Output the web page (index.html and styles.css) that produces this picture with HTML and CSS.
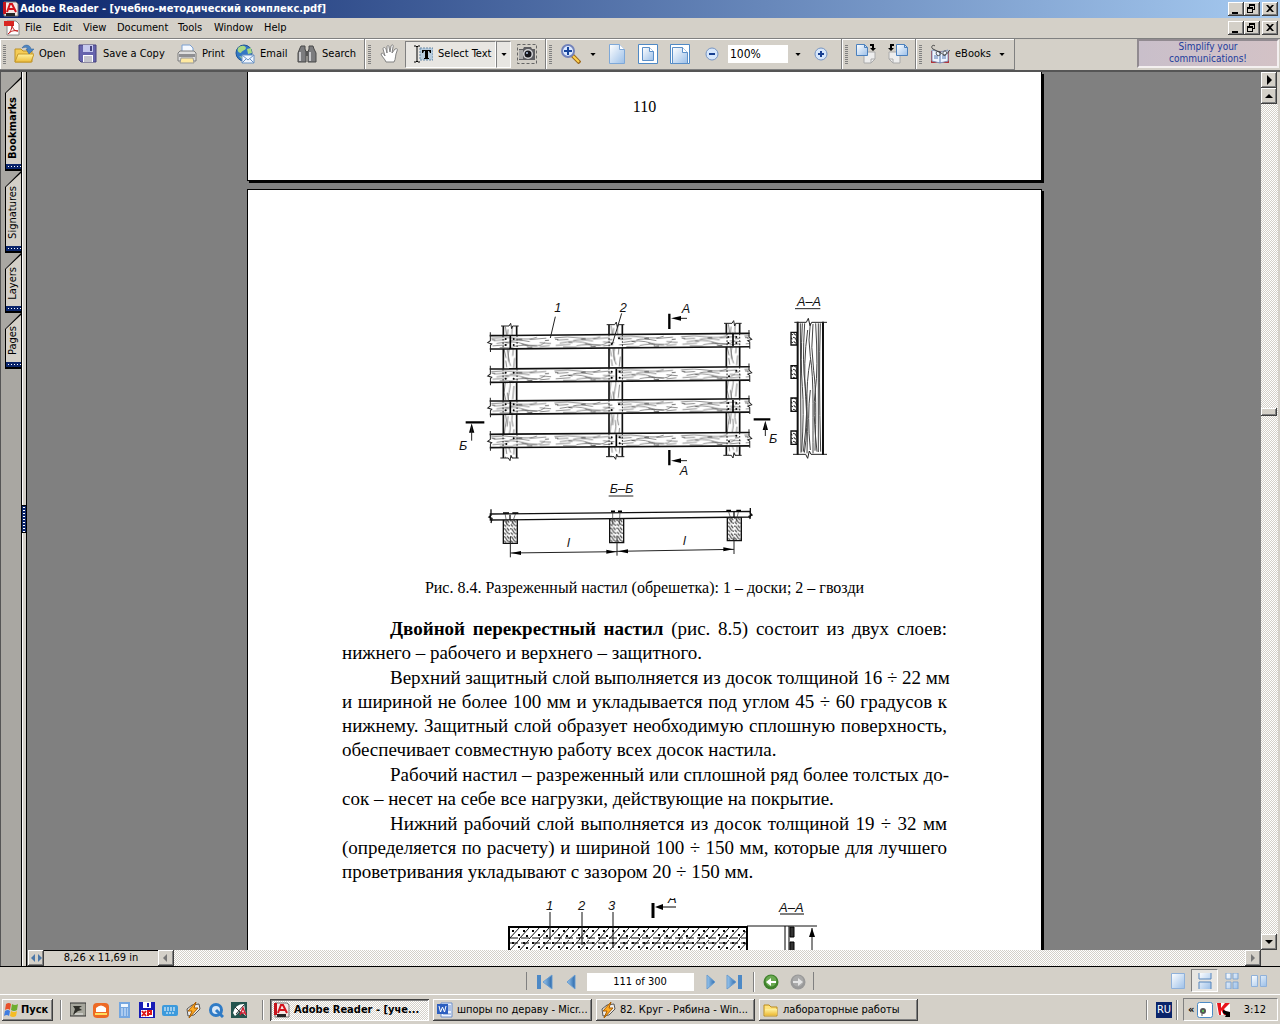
FILE: index.html
```html
<!DOCTYPE html>
<html lang="ru">
<head>
  <meta charset="utf-8">
  <title>Adobe Reader - [учебно-методический комплекс.pdf]</title>
  <link rel="stylesheet" href="styles.css">
</head>
<body>
  <!-- shared gradients -->
  <svg class="defs" width="0" height="0">
    <defs>
      <linearGradient id="blue" x1="0" y1="0" x2="1" y2="1"><stop offset="0" stop-color="#fff"/><stop offset="1" stop-color="#9bbfe8"/></linearGradient>
      <linearGradient id="nav" x1="0" y1="0" x2="1" y2="0"><stop offset="0" stop-color="#9cc8ee"/><stop offset="1" stop-color="#2a69ac"/></linearGradient>
      <linearGradient id="gold" x1="0" y1="0" x2="0" y2="1"><stop offset="0" stop-color="#fff3a0"/><stop offset="1" stop-color="#eebd3c"/></linearGradient>
      <symbol id="i-min" viewBox="0 0 16 14"><path d="M4 10h6v2H4z"/></symbol>
      <symbol id="i-restore" viewBox="0 0 16 14"><path d="M5 2h6v6H9V7h1V4H6v1H5zM3 5h6v6H3zm1 2v3h4V7z" fill-rule="evenodd"/></symbol>
      <symbol id="i-close" viewBox="0 0 16 14"><path d="M4 3h2l2 2 2-2h2L9 6.500l3 3.500h-2L8 8l-2 2H4l3-3.500z"/></symbol>
      <symbol id="i-adobe" viewBox="0 0 16 16"><path d="M1 1h12l2 2v12H1z" fill="#f4e6e4" stroke="#777"/><path d="M0 1h3v12H0z" fill="#c4141c"/><path d="M4 11L7 3h2l4 8M6 8h5" fill="none" stroke="#d3121b" stroke-width="2"/><path d="M3 12h9v3H3z" fill="#252525"/></symbol>
      <symbol id="i-down" viewBox="0 0 7 4"><path d="M0 0h7L3.500 4z"/></symbol>
      <symbol id="i-word" viewBox="0 0 16 16"><path d="M4 1h11v14H4z" fill="#eef4ff" stroke="#6d8fcb"/><path d="M11 4h3M11 6h3M11 8h3M6 12h8" stroke="#6d8fcb"/><path d="M0 2h11v10H0z" fill="#2c5fc0"/><path d="M2 4l1.500 6 2-5 2 5L9 4" fill="none" stroke="#fff"/></symbol>
      <symbol id="i-winamp" viewBox="0 0 16 16"><path d="M2 7l5-4 7-1 1 5-6 6-6 1z" fill="#eee" stroke="#555"/><path d="M11 0L3 9h4l-3 7 9-10H9z" fill="#ffab22" stroke="#a85c00"/></symbol>
      <symbol id="i-folder" viewBox="0 0 16 16"><path d="M1 3h5l2 2h6v9H1z" fill="#ffe27a" stroke="#bb8c1c"/><path d="M2 7h12v6H2z" fill="url(#gold)"/></symbol>
    </defs>
  </svg>

  <header class="titlebar">
    <svg class="ic16"><use href="#i-adobe"/></svg>
    <h1>Adobe Reader - [учебно-методический комплекс.pdf]</h1>
    <div class="winbtns">
      <button aria-label="Minimize"><svg><use href="#i-min"/></svg></button>
      <button aria-label="Restore"><svg><use href="#i-restore"/></svg></button>
      <button class="close" aria-label="Close"><svg><use href="#i-close"/></svg></button>
    </div>
  </header>

  <nav class="menubar">
    <svg class="ic16" viewBox="0 0 16 16"><path d="M3 1h9l3 3v11H3z" fill="#fff" stroke="#888"/><path d="M0 1h10v5H0z" fill="#d92622"/><path d="M4 14c2-1 4-5 4-9 1 5 3 6 6 6-4-1-7 0-10 3z" fill="none" stroke="#c11919"/></svg>
    <a href="#">File</a><a href="#">Edit</a><a href="#">View</a><a href="#">Document</a><a href="#">Tools</a><a href="#">Window</a><a href="#">Help</a>
    <div class="winbtns">
      <button aria-label="Minimize document"><svg><use href="#i-min"/></svg></button>
      <button aria-label="Restore document"><svg><use href="#i-restore"/></svg></button>
      <button class="close" aria-label="Close document"><svg><use href="#i-close"/></svg></button>
    </div>
  </nav>

  <div class="toolbar">
    <div class="group g-file">
      <i class="grip"></i>
      <button><svg class="ic20" viewBox="0 0 20 20"><path d="M1 5h6l2 2h9v11H1z" fill="#f5cc55" stroke="#bd9127"/><path d="M1 18l3-8h16l-3 8z" fill="url(#gold)" stroke="#c79a2b"/><path d="M8 4c2-4 8-4 9 1h3l-5 5-3-5h2c-1-2-3-2-6-1z" fill="#4d86c4" stroke="#2f5d94" stroke-width=".5"/></svg>Open</button>
      <button><svg class="ic20" viewBox="0 0 20 20"><path d="M1 1h17v17H3l-2-2z" fill="#6664ad" stroke="#44417f"/><path d="M5 1h10v7H5z" fill="#c6c9ee"/><path d="M5 11h10v7H5z" fill="#fff"/><path d="M6 13h8M6 15h8M6 17h8" stroke="#8a8a9c"/><path d="M12 2h2v5h-2z" fill="#44417f"/></svg>Save a Copy</button>
      <button><svg class="ic20" viewBox="0 0 20 20"><path d="M5 9V1h8l3 3v5z" fill="#f5f9ff" stroke="#7ba0d2"/><path d="M1 9l2-2h14l2 2v8H1z" fill="#dedede" stroke="#7d7d7d"/><path d="M2 10h16v3H2z" fill="#8f8f92"/><path d="M4 14h12l1 5H3z" fill="#ffe9a0" stroke="#999"/></svg>Print</button>
      <button><svg class="ic20" viewBox="0 0 20 20"><circle cx="9" cy="9" r="8" fill="#3277c5" stroke="#1f5694"/><path d="M3 4c3-3 7-3 8 0-1 3-4 2-5 5-3 0-4-3-3-5zM12 5l4-1 1 5-4 1zM4 12l4 1v3z" fill="#a9d983"/><path d="M7 11h12v8H7z" fill="#f0f6ff" stroke="#6b93c4"/><path d="M7 11l6 5 6-5M7 19l4-4M19 19l-4-4" fill="none" stroke="#6b93c4"/></svg>Email</button>
      <button><svg class="ic20" viewBox="0 0 20 20"><path d="M4 2h4v3l1 3v10H1V9l2-5zM12 2h4l1 3 2 4v9h-8V8l1-3z" fill="#7c7c7e" stroke="#484848"/><path d="M9 7h2v5H9z" fill="#555"/><path d="M3 8v9M13 8v9" stroke="#c9c9cc" stroke-width="2"/></svg>Search</button>
    </div>
    <div class="group g-select">
      <i class="grip"></i>
      <button aria-label="Hand"><svg class="ic20" viewBox="0 0 20 20"><path d="M6 18c-1-3-4-5-5-8 1-2 3 0 4 2L3 5c0-2 2-2 3 0l1 4V3c0-2 2-2 2 0l1 5 1-6c1-2 3-1 2 1l-1 6 3-4c2-1 3 0 2 2-2 4-1 8-3 11z" fill="#fff" stroke="#818181"/></svg></button>
      <button class="pressed"><svg class="ic20" viewBox="0 0 20 20"><path d="M1 2h2l1 1 1-1h2M4 3v14M1 18h2l1-1 1 1h2" fill="none" stroke="#000"/><path d="M7 4h13v12H7z" fill="#b6ccdf" stroke="#6b8aa8" stroke-dasharray="2 1"/><path d="M9 6h9v3h-1l-1-2h-1v7h1v1h-5v-1h1V7h-1l-1 2H9z"/></svg>Select Text</button>
      <button class="pressed arrow" aria-label="Select options"><svg><use href="#i-down"/></svg></button>
      <button class="snap" aria-label="Snapshot"><svg class="ic20" viewBox="0 0 20 20"><path d="M.5.500h19v19H.5z" fill="none" stroke="#666" stroke-dasharray="3 2"/><path d="M2 5h4l1-2h7l1 2h3v11H2z" fill="#5d5d61"/><path d="M2 6h4v9H2z" fill="#aaa"/><circle cx="11" cy="10" r="5" fill="#d5d5d8"/><circle cx="11" cy="10" r="3.500" fill="#15151b"/><circle cx="10" cy="9" r="1" fill="#b5c8e8"/></svg></button>
    </div>
    <div class="group g-zoom">
      <i class="grip"></i>
      <button aria-label="Zoom In tool"><svg class="ic20" viewBox="0 0 20 20"><path d="M11 11l8 8" stroke="#9c681b" stroke-width="4"/><path d="M12 12l6 6" stroke="#ffd34d" stroke-width="2"/><circle cx="7" cy="7" r="6" fill="#dbe8ff" stroke="#7282ba" stroke-width="2"/><path d="M3 6h3V3h2v3h3v2H8v3H6V8H3z" fill="#17459c"/></svg></button>
      <button class="arrow" aria-label="Zoom tools"><svg><use href="#i-down"/></svg></button>
      <button aria-label="Actual Size"><svg class="ic20" viewBox="0 0 20 20"><path d="M2.500.500h10l5 5v14h-15z" fill="url(#blue)" stroke="#7ea8d8"/><path d="M12.500.500v5h5" fill="#fff" stroke="#7ea8d8"/></svg></button>
      <button aria-label="Fit Page"><svg class="ic20" viewBox="0 0 20 20"><path d="M.5.500h19v19H.5z" fill="#fff" stroke="#4f89c5"/><path d="M4.500 3.500h7l4 4v9h-11z" fill="url(#blue)" stroke="#5b8fc8"/><path d="M11.500 3.500v4h4" fill="#fff" stroke="#5b8fc8"/></svg></button>
      <button aria-label="Fit Width"><svg class="ic20" viewBox="0 0 20 20"><path d="M.5.500h19v19H.5z" fill="#fff" stroke="#4f89c5"/><path d="M2.500 3.500h10l5 5v11h-15z" fill="url(#blue)" stroke="#5b8fc8"/><path d="M12.500 3.500v5h5" fill="#fff" stroke="#5b8fc8"/></svg></button>
      <button aria-label="Zoom Out"><svg class="ic14" viewBox="0 0 14 14"><circle cx="7" cy="7" r="6" fill="#d7e7fb" stroke="#7795c3"/><path d="M4 6h6v2H4z" fill="#173f91"/></svg></button>
      <input type="text" value="100%" aria-label="Zoom">
      <button class="arrow" aria-label="Zoom levels"><svg><use href="#i-down"/></svg></button>
      <button aria-label="Zoom In"><svg class="ic14" viewBox="0 0 14 14"><circle cx="7" cy="7" r="6" fill="#d7e7fb" stroke="#7795c3"/><path d="M4 6h2V4h2v2h2v2H8v2H6V8H4z" fill="#173f91"/></svg></button>
    </div>
    <div class="group g-rotate">
      <i class="grip"></i>
      <button aria-label="Rotate clockwise"><svg class="ic20" viewBox="0 0 20 20"><path d="M8 8h11v7l-4 4H8z" fill="#eee" stroke="#aaa"/><path d="M19 15h-4v4" fill="none" stroke="#aaa"/><path d="M.5.500h8l3 3v8H.5z" fill="url(#blue)" stroke="#4b80bd"/><path d="M8.500.500v3h3" fill="none" stroke="#4b80bd"/><path d="M14 0h4v4h2l-3 3-3-3h2V2h-2z"/></svg></button>
      <button aria-label="Rotate counterclockwise"><svg class="ic20" viewBox="0 0 20 20"><path d="M1 8h11v11H5l-4-4z" fill="#eee" stroke="#aaa"/><path d="M1 15h4v4" fill="none" stroke="#aaa"/><path d="M8.500.500h8l3 3v8h-11z" fill="url(#blue)" stroke="#4b80bd"/><path d="M16.500.500v3h3" fill="none" stroke="#4b80bd"/><path d="M6 0H2v4H0l3 3 3-3H4V2h2z"/></svg></button>
    </div>
    <div class="group g-ebooks">
      <i class="grip"></i>
      <button><svg class="ic20" viewBox="0 0 20 20"><path d="M1 7h18v12H1z" fill="#b2343a"/><path d="M2 6l8 2 8-2v11l-8 2-8-2z" fill="#eef4ff" stroke="#8395b8"/><path d="M10 8v11M4 12h4M4 14h4M12 12h4M12 14h4" stroke="#5679b1"/><path d="M5 2C3 0 0 3 3 5l6 3c3 2 0 5-2 3s0-5 3-3 3 4 5 3 2-4 0-4-3 3-1 4 4-3 6-5" fill="none" stroke="#444"/></svg>eBooks</button>
      <button class="arrow" aria-label="eBooks options"><svg><use href="#i-down"/></svg></button>
    </div>
    <a class="promo" href="#">Simplify your<br>communications!</a>
  </div>

  <main>
    <aside class="tabs">
      <button class="tab active"><span>Bookmarks</span></button>
      <button class="tab signatures"><span>Signatures</span></button>
      <button class="tab layers"><span>Layers</span></button>
      <button class="tab pages"><span>Pages</span></button>
    </aside>
    <div class="splitter"><i></i></div>

    <div class="viewer">
      <div class="canvas">
        <article class="page page-prev"><p class="pageno">110</p></article>
        <article class="page">
          <svg class="figure" viewBox="16 0 1200 900">
            <defs>
              <pattern id="grain" width="190" height="40" patternUnits="userSpaceOnUse">
                <path d="M4 8q40-5 78 1t60-3M12 15l34-2M60 17q20-6 60 2M20 24q50-10 86 3t60-5M8 31l44-3M70 33q30-6 72-2M120 13l50-4M150 22l34 3M30 36l40 1M150 34l30-3M96 26l20 6" fill="none" stroke="#555" stroke-width="2"/>
                <path d="M6 12l10 1M84 13l14-1M46 21l12 2M112 35l16 1M166 16l12-1" stroke="#222" stroke-width="2"/>
              </pattern>
              <pattern id="grainV" width="40" height="130" patternUnits="userSpaceOnUse">
                <path d="M7 2q6 20-1 44t3 50M15 10l-3 32M20 26q5 20-2 44t5 50M28 2q-4 20 2 40M33 50l-4 40M13 70l5 38M35 96l-3 30M8 104l3 20" fill="none" stroke="#444" stroke-width="2"/>
              </pattern>
              <pattern id="hatch" width="20" height="24" patternUnits="userSpaceOnUse">
                <path d="M0 4q7 0 9 7t11 9M2 16l7 6M11 2l7 8" fill="none" stroke="#222" stroke-width="3"/>
              </pattern>
              <g id="plank">
                <path d="M0 0h780v40H0z" fill="#fff"/>
                <path d="M0 0h780v40H0z" fill="url(#grain)"/>
                <path d="M0 0h780M0 40h780" stroke="#111" stroke-width="5"/>
                <path d="M2-10v25l-8 6 12 4-4 4v20M778-10v20l8 8-12 4 6 4v20" fill="none" stroke="#222" stroke-width="3"/>
                <path d="M40 0v40M82 0v40M358 0v40M398 0v40M712 0v40M750 0v40" stroke="#222" stroke-width="3" stroke-dasharray="5 5"/>
              </g>
              <g id="post">
                <path d="M0 0h42v396H0z" fill="#fff"/>
                <path d="M0 0h42v396H0z" fill="url(#grainV)"/>
                <path d="M1 0v396M41 0v396" stroke="#111" stroke-width="5"/>
                <path d="M-6 0h24l5-8 3 16 3-8h18M-8 396h24l5 8 3-16 3 8h20" fill="none" stroke="#222" stroke-width="3"/>
              </g>
              <g id="nails"><circle cx="-14" cy="-9" r="3"/><circle cx="10" cy="-9" r="3"/><circle cx="-14" cy="9" r="3"/><circle cx="10" cy="9" r="3"/></g>
              <g id="joint"><path d="M0-18v36" stroke="#000" stroke-width="5"/><use href="#nails"/></g>
              <g id="pair"><circle cx="-12" cy="9" r="3"/><circle cx="10" cy="-8" r="3"/></g>
              <g id="foot"><path d="M0 0h42v72H0z" fill="#fff"/><path d="M0 0h42v72H0z" fill="url(#hatch)" stroke="#111" stroke-width="4"/></g>
            </defs>
            <use href="#post" x="190" y="138"/>
            <use href="#post" x="507" y="134"/>
            <use href="#post" x="859" y="130"/>
            <use href="#plank" transform="translate(150 167) rotate(-.5)"/>
            <use href="#plank" transform="translate(150 267) rotate(-.5)"/>
            <use href="#plank" transform="translate(150 363) rotate(-.5)"/>
            <use href="#plank" transform="translate(150 463) rotate(-.4)"/>
            <use href="#joint" x="212" y="186"/><use href="#pair" x="528" y="183"/><use href="#joint" x="880" y="180"/>
            <use href="#nails" x="212" y="287"/><use href="#joint" x="530" y="284"/><use href="#pair" x="880" y="280"/>
            <use href="#joint" x="212" y="382"/><use href="#pair" x="528" y="381"/><use href="#joint" x="880" y="378"/>
            <use href="#pair" x="212" y="483"/><use href="#joint" x="530" y="481"/><use href="#pair" x="880" y="475"/>
            <path d="M347 110l-15 64M546 100l-28 92" stroke="#222" stroke-width="3"/>
            <g class="sketch">
              <text x="344" y="96">1</text>
              <text x="540" y="96">2</text>
              <text x="726" y="100">А</text>
              <text x="720" y="586">А</text>
              <text x="58" y="510">Б</text>
              <text x="988" y="490">Б</text>
              <text x="1072" y="77">А–А</text>
              <text x="510" y="638">Б–Б</text>
              <text x="382" y="800">l</text>
              <text x="730" y="794">l</text>
            </g>
            <path d="M689 101v46M689 510v46" stroke="#000" stroke-width="7"/>
            <path d="M742 115h-36M742 542h-36" stroke="#222" stroke-width="3"/>
            <path d="M694 115l30-7v14zM694 542l30-7v14zM96 430l-8 28h16zM977 422l-8 28h16z"/>
            <path d="M78 427h56M942 418h50" stroke="#000" stroke-width="7"/>
            <path d="M96 440v42M977 430v38M1066 86h76M507 648h74" stroke="#222" stroke-width="3"/>
            <!-- section A-A -->
            <path d="M1054 157h18v38h-18zM1054 257h18v38h-18zM1054 354h18v40h-18zM1054 453h18v40h-18z" fill="url(#hatch)" stroke="#111" stroke-width="4"/>
            <path d="M1074 127h74v396h-74z" fill="#fff"/>
            <path d="M1082 130l2 388M1088 130q-6 120 0 190t-2 195M1095 130q-8 120 2 190t-6 195M1104 150q-14 100-6 200t-4 168M1112 240q-12 60-10 140t0 140M1112 330q-10 80 0 180M1112 130q-8 50 0 100t8 140 0 150M1120 132q-8 70 2 140t4 240M1128 130q8 140-1 200t5 185M1136 130v386M1142 130q-5 160 1 385" fill="none" stroke="#444" stroke-width="3"/>
            <path d="M1074 125v400M1150 125v400" stroke="#111" stroke-width="6"/>
            <path d="M1064 127h36l6-12 5 22 5-10h46M1060 523h38l6 12 5-22 5 10h48" fill="none" stroke="#222" stroke-width="3"/>
            <!-- section B-B -->
            <use href="#foot" x="191" y="718"/><use href="#foot" x="510" y="716"/><use href="#foot" x="863" y="710"/>
            <path d="M152 702l780-8v17l-780 9z" fill="#fff" stroke="#111" stroke-width="4"/>
            <path d="M154 688v18l-6 5 9 4-3 14M932 684v16l5 5-9 4 4 8M211 704v16M883 696v16" fill="none" stroke="#111" stroke-width="4"/>
            <path d="M196 700l6 34M228 700l-12 34M519 694v40M541 694l-2 40M866 692l10 34M897 692l-8 34" stroke="#333" stroke-width="2"/>
            <path d="M190 699h18M218 699h18M514 694h12M535 694h12M860 692h14M890 692h14" stroke="#000" stroke-width="5"/>
            <path d="M212 770v62M532 770v57M883 770v52M212 819l320-4M532 814l351-6" stroke="#222" stroke-width="3"/>
            <path d="M214 819l30-6v12zM530 815l-30-6v12zM535 814l30-6v12zM881 808l-30-6v12z"/>
          </svg>
          <p class="caption">Рис. 8.4. Разреженный настил (обрешетка): 1 – доски; 2 – гвозди</p>
          <div class="text">
            <p><b>Двойной перекрестный настил</b> (рис. 8.5) состоит из двух слоев:<br><span>нижнего – рабочего и верхнего – защитного.</span></p>
            <p>Верхний защитный слой выполняется из досок толщиной 16 ÷ 22 мм<br>и шириной не более 100 мм и укладывается под углом 45 ÷ 60 градусов к<br>нижнему. Защитный слой образует необходимую сплошную поверхность,<br><span>обеспечивает совместную работу всех досок настила.</span></p>
            <p>Рабочий настил – разреженный или сплошной ряд более толстых до-<br><span>сок – несет на себе все нагрузки, действующие на покрытие.</span></p>
            <p>Нижний рабочий слой выполняется из досок толщиной 19 ÷ 32 мм<br>(определяется по расчету) и шириной 100 ÷ 150 мм, которые для лучшего<br><span>проветривания укладывают с зазором 20 ÷ 150 мм.</span></p>
          </div>
          <svg class="figure2" viewBox="445 898 400 90">
            <defs>
              <pattern id="boards" x="509" y="927" width="20" height="12" patternUnits="userSpaceOnUse">
                <path d="M0 12L11 0M10 12L20 1" stroke="#111"/>
                <path d="M3 3h2v2H3zM9 7h2v2H9zM14 3h2v2h-2zM17 8h2v2h-2z"/>
              </pattern>
            </defs>
            <path d="M509 927h238v70H509z" fill="url(#boards)" stroke="#000" stroke-width="2"/>
            <path d="M510 938h236M510 943h236" stroke="#111" stroke-dasharray="8 3"/>
            <path d="M550 912v28M582 912v33M613 912v36M747 926h70M812 928v60" stroke="#111"/>
            <path d="M653 903v15" stroke="#000" stroke-width="3"/>
            <path d="M676 907h-16M780 914h24" stroke="#000"/>
            <path d="M655 907l8-3v6zM812 928l-3 9h6z"/>
            <path d="M785 926v70M789 926v70" stroke="#000"/>
            <path d="M790 927h4v10h-4zM790 942h4v12h-4z" fill="#333" stroke="#000"/>
            <g class="sketch small">
              <text x="546" y="910">1</text><text x="578" y="910">2</text><text x="608" y="910">3</text>
              <text x="668" y="903">А</text><text x="779" y="912">А–А</text>
            </g>
          </svg>
        </article>
      </div>
      <div class="vscroll">
        <button aria-label="Panel menu"><svg viewBox="0 0 16 16"><path d="M6 3l5 5-5 5z"/></svg></button>
        <button aria-label="Scroll up"><svg viewBox="0 0 16 16"><path d="M8 6l4 4H4z"/></svg></button>
        <div class="track"><i class="before"></i><i class="thumb"></i><i class="after"></i></div>
        <button aria-label="Scroll down"><svg viewBox="0 0 16 16"><path d="M4 6h8l-4 4z"/></svg></button>
      </div>
      <div class="hscroll">
        <button aria-label="Resize"><svg viewBox="0 0 16 16"><path d="M7 4v8L3 8zM10 4v8l4-4z" fill="#4c78a8"/></svg></button>
        <span class="size">8,26 x 11,69 in</span>
        <button aria-label="Scroll left"><svg viewBox="0 0 16 16"><path d="M9 4v8L5 8z" fill="#777"/></svg></button>
        <div class="track"></div>
        <button aria-label="Scroll right"><svg viewBox="0 0 16 16"><path d="M6 4v8l4-4z" fill="#777"/></svg></button>
      </div>
    </div>
  </main>

  <footer class="statusbar">
    <div class="pager">
      <button aria-label="First Page"><svg class="ic16" viewBox="0 0 16 16"><path d="M0 1h4v14H0z" fill="#4d89c6"/><path d="M15 1v14L6 8z" fill="url(#nav)" stroke="#6a9dd0"/></svg></button>
      <button aria-label="Previous Page"><svg class="ic16" viewBox="0 0 16 16"><path d="M12 1v14L4 8z" fill="url(#nav)" stroke="#6a9dd0"/></svg></button>
      <input type="text" value="111 of 300" aria-label="Page">
      <button aria-label="Next Page"><svg class="ic16" viewBox="0 0 16 16"><path d="M4 1v14l8-7z" fill="url(#nav)" stroke="#6a9dd0"/></svg></button>
      <button aria-label="Last Page"><svg class="ic16" viewBox="0 0 16 16"><path d="M12 1h4v14h-4z" fill="#4d89c6"/><path d="M1 1v14l9-7z" fill="url(#nav)" stroke="#6a9dd0"/></svg></button>
      <i class="sep"></i>
      <button aria-label="Previous View"><svg class="ic16" viewBox="0 0 16 16"><circle cx="8" cy="8" r="7.500" fill="#3f812c"/><circle cx="8" cy="7" r="5.500" fill="#6aa951"/><path d="M3 8l5-4v3h5v2H8v3z" fill="#fff"/></svg></button>
      <button aria-label="Next View"><svg class="ic16" viewBox="0 0 16 16"><circle cx="8" cy="8" r="7.500" fill="#999"/><circle cx="8" cy="7" r="5.500" fill="#aaa"/><path d="M13 8L8 4v3H3v2h5v3z" fill="#e4e4e4"/></svg></button>
    </div>
    <div class="layouts">
      <button aria-label="Single Page"><svg class="ic16" viewBox="0 0 16 16"><path d="M1.500.500h13v15h-13z" fill="url(#blue)" stroke="#8fb1da"/></svg></button>
      <button class="pressed" aria-label="Continuous"><svg class="ic16" viewBox="0 0 16 16"><path d="M2 0h12v6H2zM2 9h12v7H2z" fill="url(#blue)"/><path d="M2 0v6h12V0M2 16V9h12v7" fill="none" stroke="#5785bb"/></svg></button>
      <button aria-label="Continuous - Facing"><svg class="ic16" viewBox="0 0 16 16"><path d="M2 0h5v6H2zM9 0h5v6H9zM2 9h5v7H2zM9 9h5v7H9z" fill="url(#blue)" stroke="#7fa5d2"/></svg></button>
      <button aria-label="Facing"><svg class="ic16" viewBox="0 0 16 16"><path d="M.5 2.500h6v11h-6zM9.500 2.500h6v11h-6z" fill="url(#blue)" stroke="#8fb1da"/></svg></button>
    </div>
  </footer>

  <div class="taskbar">
    <button class="start"><svg class="ic16" viewBox="0 0 16 16"><path d="M2 2q3-2 5 0L6 8Q4 6 1 8z" fill="#e8502a"/><path d="M8 2q3 2 6 0l-1 6q-3 2-6 0z" fill="#6dad2e"/><path d="M1 9q3-2 5 0l-1 5q-2-2-5 0z" fill="#3f7de0"/><path d="M7 9q3 2 6 0l-1 5q-3 2-6 0z" fill="#f4bc25"/></svg>Пуск</button>
    <i class="sep"></i>
    <div class="quick">
      <a href="#" aria-label="Desktop"><svg class="ic16" viewBox="0 0 16 16"><path d="M0 1h16v13H0z" fill="#a6a69c" stroke="#333"/><path d="M3 4h9l-3 2 3 2-4 1-5 4 2-6z" fill="#2e2e28"/><path d="M5 12h8" stroke="#eee"/></svg></a>
      <a href="#" aria-label="Mail"><svg class="ic16" viewBox="0 0 16 16"><rect y="1" width="16" height="15" rx="4" fill="#ed6a25"/><path d="M3 10V6q5-5 10 0v4z" fill="#fff"/><path d="M2 11h12v2H2z" fill="#ffde5c"/></svg></a>
      <a href="#" aria-label="Calculator"><svg class="ic16" viewBox="0 0 16 16"><path d="M3 0h11v16H3z" fill="#76a7e0"/><path d="M5 2h7v3H5z" fill="#f0f8ff"/><path d="M5 7h7M5 9h7M5 11h7M5 13h7" stroke="#e3efff" stroke-dasharray="2 1"/></svg></a>
      <a href="#" aria-label="Total Commander"><svg class="ic16" viewBox="0 0 16 16"><path d="M0 0h16v16H0z" fill="#171bb6"/><path d="M4 0h8v6H4z" fill="#fff"/><path d="M8 1h2v4H8z" fill="#171bb6"/><path d="M2 8h12v7H2z" fill="#fff"/><path d="M3 9l4 5M7 9l-4 5M9 14V9h3v3H9" fill="none" stroke="#e01717" stroke-width="2"/></svg></a>
      <a href="#" aria-label="Keyboard"><svg class="ic16" viewBox="0 0 16 16"><rect y="3" width="16" height="11" rx="2" fill="#3c9adc"/><path d="M2 6h12M2 8h12M4 11h8" stroke="#fff" stroke-dasharray="2 1"/></svg></a>
      <a href="#" aria-label="Winamp"><svg class="ic16"><use href="#i-winamp"/></svg></a>
      <a href="#" aria-label="QuickTime"><svg class="ic16" viewBox="0 0 16 16"><circle cx="8" cy="8" r="5.500" fill="#d9e7f6" stroke="#2f7bc6" stroke-width="3"/><path d="M8 8l7 7" stroke="#2f7bc6" stroke-width="3"/></svg></a>
      <a href="#" aria-label="AutoCAD"><svg class="ic16" viewBox="0 0 16 16"><path d="M0 0h16v16H0z" fill="#24544e"/><path d="M2 11Q4 2 13 2l2 12-6-5-5 5z" fill="#fff"/><path d="M4 5l9 9M13 3l-8 9" stroke="#333"/><path d="M9 13l3-7 3 7M10 11h4" fill="none" stroke="#d12235" stroke-width="1.500"/></svg></a>
    </div>
    <i class="sep"></i>
    <div class="tasks">
      <button class="current"><svg class="ic16"><use href="#i-adobe"/></svg><span>Adobe Reader - [уче...</span></button>
      <button><svg class="ic16"><use href="#i-word"/></svg><span>шпоры по дераву - Micr...</span></button>
      <button><svg class="ic16"><use href="#i-winamp"/></svg><span>82. Круг - Рябина - Win...</span></button>
      <button><svg class="ic16"><use href="#i-folder"/></svg><span>лабораторные работы</span></button>
    </div>
    <i class="sep"></i>
    <button class="lang">RU</button>
    <i class="sep"></i>
    <div class="tray">
      <b>«</b>
      <svg class="ic16" viewBox="0 0 16 16"><rect x=".5" y=".5" width="15" height="15" rx="2" fill="#fff" stroke="#4b8ac5"/><circle cx="6" cy="9" r="3" fill="#555"/><circle cx="6" cy="9" r="1" fill="#5be04f"/><path d="M5 12v2" stroke="#555"/></svg>
      <svg class="ic16" viewBox="0 0 16 16"><path d="M0 1h14v12H2z" fill="#fff"/><path d="M1 1h4v5l4-5h5L8 7l4 6H8L5 8v5H3z" fill="#e8141b"/><path d="M7 8l3 1 4 1v5H9l1-2-3-2z"/></svg>
      <time>3:12</time>
    </div>
  </div>
</body>
</html>
```
FILE: styles.css
```css
* {
  box-sizing: border-box;
}
body {
  margin: 0;
  height: 100vh;
  display: flex;
  flex-direction: column;
  overflow: hidden;
  background: #d4d0c8;
  color: #000;
  font: 11px/14px "DejaVu Sans Condensed", Tahoma, sans-serif;
}
button, input {
  margin: 0;
  padding: 0;
  border: 0;
  border-radius: 0;
  background: none;
  color: inherit;
  font: inherit;
}
a {
  color: inherit;
  text-decoration: none;
}
svg {
  display: block;
  flex: none;
}
.defs {
  position: absolute;
}
.ic14 {
  width: 14px;
  height: 14px;
}
.ic16 {
  width: 16px;
  height: 16px;
}
.ic20 {
  width: 20px;
  height: 20px;
}

/* title and menu */
.titlebar {
  height: 18px;
  flex: none;
  display: flex;
  align-items: center;
  gap: 1px;
  padding: 0 2px 0 3px;
  background: linear-gradient(90deg, #0a246a, #a6caf0);
  color: #fff;
}
.titlebar h1 {
  margin: 0;
  flex: 1;
  font-size: 11px;
  line-height: 14px;
}
.winbtns {
  display: flex;
  margin-left: auto;
}
.winbtns button {
  width: 16px;
  height: 14px;
}
.winbtns svg {
  width: 16px;
  height: 14px;
}
.winbtns .close {
  margin-left: 2px;
}
.winbtns button, .vscroll button, .hscroll button, .thumb, .start, .tasks button {
  background: #d4d0c8;
  color: #000;
  box-shadow: inset -1px -1px #404040, inset 1px 1px #fff, inset -2px -2px #808080;
}
.menubar {
  height: 20px;
  flex: none;
  display: grid;
  grid-template-columns: 21px 28px 30px 34px 61px 36px 50px 40px 1fr;
  align-items: center;
  padding: 0 2px 0 4px;
}

/* toolbar */
.toolbar {
  height: 34px;
  flex: none;
  display: flex;
  border-top: 1px solid #808080;
  border-bottom: 2px solid #555;
}
.group {
  display: grid;
  align-items: center;
  padding-left: 3px;
  border-right: 1px solid #808080;
  border-bottom: 1px solid #808080;
  box-shadow: inset 1px 1px #fff;
}
.g-file {
  grid-template-columns: 11px 64px 99px 58px 62px 67px;
}
.g-select {
  grid-template-columns: 12px 25px 91px 15px 34px;
}
.g-zoom {
  grid-template-columns: 12px 24px 22px 31px 32px 35px 23px 62px 24px 27px;
}
.g-rotate {
  grid-template-columns: 11px 32px 27px;
}
.g-ebooks {
  grid-template-columns: 11px 64px 20px;
}
.grip {
  width: 3px;
  height: 19px;
  background: repeating-linear-gradient(#808080 0 1px, #d4d0c8 1px 2px);
}
.group button {
  display: flex;
  align-items: center;
  gap: 5px;
  white-space: nowrap;
}
.group .arrow {
  width: 15px;
  justify-content: center;
}
.arrow svg {
  width: 6px;
  height: 3px;
}
.group .pressed {
  height: 27px;
  padding-left: 7px;
  background: #e8e6e2;
  border: 1px solid #808080;
  border-right-color: #fff;
  border-bottom-color: #fff;
}
.group .pressed.arrow {
  padding: 0;
}
.group .snap {
  padding-left: 6px;
}
.group input {
  width: 60px;
  height: 18px;
  padding-left: 2px;
  background: #fff;
  font-size: 12px;
}
.promo {
  width: 142px;
  height: 29px;
  margin-left: auto;
  margin-right: 1px;
  background: linear-gradient(90deg, #c9bfca, #d3c2c6);
  border: 2px solid #918a90;
  border-right-color: #f4f0f0;
  border-bottom-color: #f4f0f0;
  color: #1c3c9c;
  font-size: 10px;
  line-height: 12px;
  text-align: center;
}

/* navigation tabs */
main {
  flex: 1;
  min-height: 0;
  display: flex;
  padding-right: 2px;
  border-bottom: 1px solid #000;
}
.tabs {
  width: 21px;
  flex: none;
  padding: 5px 0 0 4px;
  background: #a9a7a2;
  border-left: 1px solid #555;
}
.tab {
  position: relative;
  z-index: 0;
  display: flex;
  align-items: center;
  justify-content: center;
  width: 16px;
  height: 94px;
  padding-top: 8px;
  background: #000;
  clip-path: polygon(16px 0, 16px 100%, 0 100%, 0 16px);
}
.tab::before {
  content: "";
  position: absolute;
  z-index: -1;
  inset: 0 0 7px 1px;
  background: #d4d0c8;
  clip-path: polygon(15px 2px, 15px 100%, 0 100%, 0 16px);
}
.tab::after {
  content: "";
  position: absolute;
  inset: auto 0 2px 1px;
  height: 5px;
  background: radial-gradient(#fff 40%, #0a246a 45%) 1px 1px / 3px 3px, #0a246a;
}
.tab span {
  writing-mode: vertical-rl;
  transform: rotate(180deg);
}
.tab.active {
  font-weight: bold;
}
.signatures {
  height: 82px;
  padding-top: 0;
}
.layers {
  height: 60px;
  padding-top: 0;
}
.pages {
  height: 56px;
  padding-top: 0;
}
.splitter {
  width: 7px;
  flex: none;
  display: flex;
  align-items: center;
  background: linear-gradient(90deg, #000 1px, #fff 1px 2px, #d4d0c8 2px 5px, #000 5px 6px, #808080 6px);
}
.splitter i {
  width: 6px;
  height: 28px;
  border: 1px solid #000;
  background: radial-gradient(#fff 40%, #0a246a 45%) 0 0 / 4px 3px;
}

/* document area */
.viewer {
  flex: 1;
  min-width: 0;
  display: grid;
  grid-template-columns: 1fr 17px;
  grid-template-rows: 1fr 16px;
}
.canvas {
  display: flex;
  flex-direction: column;
  align-items: center;
  gap: 8px;
  overflow: hidden;
  background: #808080;
}
.page {
  width: 795px;
  min-height: 1123px;
  flex: none;
  background: #fff;
  border: 1px solid #000;
  box-shadow: 2px 2px #000;
  font-family: "Liberation Serif", "Times New Roman", serif;
}
.page-prev {
  min-height: 109px;
  border-top: 0;
}
.pageno {
  margin: 26px 0 0;
  font-size: 16px;
  line-height: 18px;
  text-align: center;
}
.figure {
  width: 400px;
  height: 300px;
  margin: 90px auto 0;
}
.sketch {
  font: italic 38px "Liberation Sans", Arial, sans-serif;
  fill: #111;
}
.sketch.small {
  font-size: 13px;
}
.caption {
  margin: 0;
  font-size: 16px;
  line-height: 16px;
  text-align: center;
}
.text {
  margin: 21px 94px 14px;
  font-size: 19px;
  line-height: 24px;
}
.text p {
  margin: 0 0 1px;
  text-indent: 48px;
  text-align: justify;
  text-align-last: justify;
  white-space: nowrap;
}
.text p span {
  display: block;
  text-indent: 0;
  text-align-last: left;
}
.figure2 {
  width: 400px;
  height: 90px;
  margin: 0 auto;
}

/* scrollbars */
.vscroll {
  display: flex;
  flex-direction: column;
}
.vscroll button {
  width: 16px;
  height: 16px;
}
.vscroll svg, .hscroll svg {
  width: 16px;
  height: 16px;
}
.track {
  flex: 1;
  display: flex;
  flex-direction: column;
  background: repeating-conic-gradient(#fff 0 25%, #d4d0c8 0 50%) 0 0 / 2px 2px;
}
.before {
  flex: 304;
}
.after {
  flex: 518;
}
.thumb {
  width: 16px;
  height: 8px;
}
.hscroll {
  display: flex;
}
.hscroll button {
  width: 16px;
  height: 16px;
}
.size {
  width: 114px;
  border-top: 1px solid #000;
  text-align: center;
}

/* status bar */
.statusbar {
  height: 27px;
  flex: none;
  display: grid;
  grid-template-columns: 1fr 288px 1fr;
  align-items: center;
  padding-left: 59px;
}
.pager {
  grid-column: 2;
  display: grid;
  grid-template-columns: 26px 24px 116px 23px 27px 10px 27px 16px;
  align-items: center;
  height: 18px;
  padding-left: 10px;
  border-left: 1px solid #808080;
  border-right: 1px solid #808080;
}
.pager input {
  width: 107px;
  height: 18px;
  background: #fff;
  text-align: center;
}
.layouts {
  display: flex;
  justify-content: flex-end;
  padding-right: 8px;
}
.layouts button {
  width: 27px;
  height: 23px;
  display: flex;
  align-items: center;
  justify-content: center;
}
.layouts .pressed {
  background: #e8e6e2;
  border: 1px solid #808080;
  border-right-color: #fff;
  border-bottom-color: #fff;
}
.sep {
  width: 2px;
  height: 20px;
  border-left: 1px solid #808080;
  border-right: 1px solid #fff;
}

/* taskbar */
.taskbar {
  height: 30px;
  flex: none;
  display: flex;
  align-items: center;
  padding: 0 2px;
  border-top: 1px solid #fff;
}
.start {
  display: flex;
  align-items: center;
  gap: 1px;
  width: 51px;
  height: 22px;
  padding-left: 2px;
  margin-right: 7px;
  font-weight: bold;
}
.quick {
  display: flex;
  gap: 7px;
  margin: 0 15px 0 8px;
}
.tasks {
  flex: 1;
  display: flex;
  gap: 4px;
  margin-left: 6px;
}
.tasks button {
  display: flex;
  align-items: center;
  gap: 4px;
  width: 159px;
  height: 22px;
  padding: 0 4px;
}
.tasks span {
  white-space: nowrap;
}
.tasks .current {
  font-weight: bold;
  background: repeating-conic-gradient(#fff 0 25%, #d4d0c8 0 50%) 0 0 / 2px 2px;
  box-shadow: inset 1px 1px #404040, inset -1px -1px #fff, inset 2px 2px #808080;
}
.lang {
  width: 16px;
  height: 16px;
  margin: 0 4px 0 8px;
  background: #0a246a;
  color: #fff;
}
.tray {
  display: flex;
  align-items: center;
  gap: 3px;
  width: 95px;
  height: 23px;
  margin-left: 5px;
  padding: 0 11px 0 4px;
  border: 1px solid #808080;
  border-right-color: #fff;
  border-bottom-color: #fff;
}
.tray time {
  margin-left: auto;
}
```
